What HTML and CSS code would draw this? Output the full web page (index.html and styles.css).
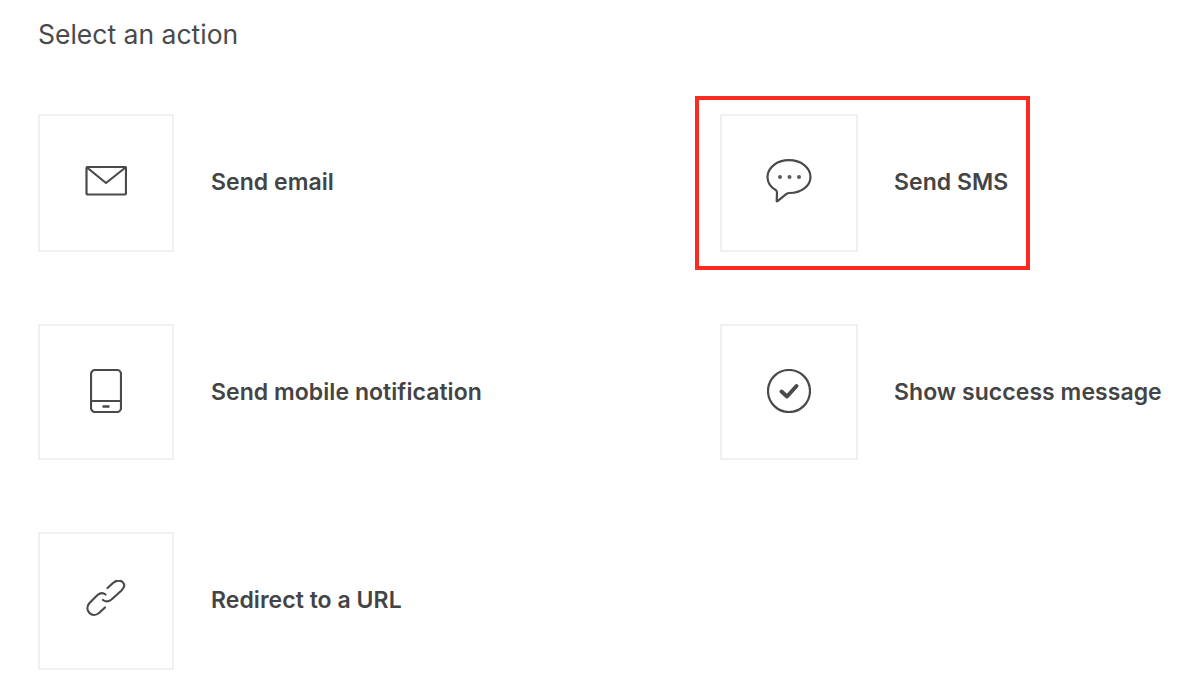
FILE: index.html
```html
<!DOCTYPE html>
<html lang="en">
<head>
<meta charset="utf-8">
<title>Select an action</title>
<link rel="stylesheet" href="styles.css">
</head>
<body>
<main class="page">
  <h1 class="title">Select an action</h1>
  <div class="actions">
    <div class="action">
      <div class="tile">
        <svg class="icon icon-mail" width="42" height="30" viewBox="0 0 42 30"><rect x="1.500" y="1" width="39.500" height="27.500" rx="1.500"/><path d="M2 1.500 21 17 40.500 1.500"/></svg>
      </div>
      <span class="label">Send email</span>
    </div>
    <div class="action action-wide">
      <div class="tile">
        <svg class="icon" width="46" height="44" viewBox="0 0 46 44"><path d="M23 1.200C11 1.200 1.500 8.600 1.500 18c0 5.600 3.300 10.300 8.500 13.300 1 .6 1 .9 1 2.700l-.3 7.800c0 .5.400.7.800.4l9-7.300c.8-.6 1.500-.9 3-.9 11.500 0 21-7 21-16C44.500 8.600 35 1.200 23 1.200Z"/><circle class="dot" cx="14" cy="18" r="2"/><circle class="dot" cx="23.500" cy="18" r="2"/><circle class="dot" cx="33" cy="18" r="2"/></svg>
      </div>
      <span class="label">Send SMS</span>
      <div class="highlight"></div>
    </div>
    <div class="action action-short">
      <div class="tile">
        <svg class="icon" width="32" height="44" viewBox="0 0 32 44"><rect x="1" y="1" width="30" height="42" rx="4"/><path d="M1 32H31"/><path class="bar" d="M12.500 37.500H19.500"/></svg>
      </div>
      <span class="label">Send mobile notification</span>
    </div>
    <div class="action action-wide action-short">
      <div class="tile">
        <svg class="icon" width="44" height="44" viewBox="0 0 44 44"><circle cx="22" cy="22" r="21"/><path class="tick" d="M14.500 22.500 20 27.500 29.500 17"/></svg>
      </div>
      <span class="label">Show success message</span>
    </div>
    <div class="action">
      <div class="tile">
        <svg class="icon" width="40" height="38" viewBox="0 0 40 38"><path d="M19.500 14.500C17 12.500 14 13 11.500 15L3.500 23C.5 26.500 1 30.500 3.500 33 6 35.500 10 35.500 13 33L19 27.500"/><path d="M17 20C19.500 22 23 21.500 25.500 19.500L35.500 10.500C39 7 39 4 36.500 2 33.500-.5 30 .5 27 3L21.500 8"/></svg>
      </div>
      <span class="label">Redirect to a URL</span>
    </div>
  </div>
</main>
</body>
</html>
```
FILE: styles.css
```css
* {
  box-sizing: border-box;
}

html,
body {
  margin: 0;
  background: #fff;
}

body {
  height: 694px;
  overflow: hidden;
  font-family: "Inter", "Open Sans", sans-serif;
  color: #444;
}

.page {
  padding: 17px 0 0 38px;
}

.title {
  margin: 0 0 63px;
  height: 34px;
  font-size: 26.500px;
  line-height: 34px;
  font-weight: 400;
  color: #4a4a4a;
}

.actions {
  display: grid;
  grid-template-columns: 682px 1fr;
  grid-template-rows: 138px 136px 138px;
  row-gap: 72px;
}

.action {
  position: relative;
  display: flex;
  align-items: center;
  gap: 37px;
}

.action-wide {
  gap: 36px;
}

.tile {
  flex: none;
  display: flex;
  align-items: center;
  justify-content: center;
  width: 136px;
  height: 100%;
  border: 2px solid #f0f0f0;
}

.action-wide .tile {
  width: 138px;
}

.label {
  margin-bottom: 3px;
  font-size: 23px;
  font-weight: 600;
  letter-spacing: 0.050px;
  white-space: nowrap;
  color: #444;
}

.action-short .label {
  margin-bottom: 1px;
}

.icon {
  display: block;
  margin-bottom: 4px;
  fill: none;
  stroke: #4a4a4a;
  stroke-width: 2.200;
  stroke-linejoin: round;
  stroke-linecap: round;
}

.action-short .icon {
  margin-bottom: 2px;
}

.icon .dot {
  fill: #5a5a5a;
  stroke: none;
}

.icon .bar {
  stroke-width: 2.500;
  stroke-linecap: butt;
}

.icon .tick {
  stroke-width: 4;
}

.highlight {
  position: absolute;
  left: -25px;
  top: -18px;
  width: 335px;
  height: 174px;
  border: 4px solid #fb2b20;
  pointer-events: none;
}
```
